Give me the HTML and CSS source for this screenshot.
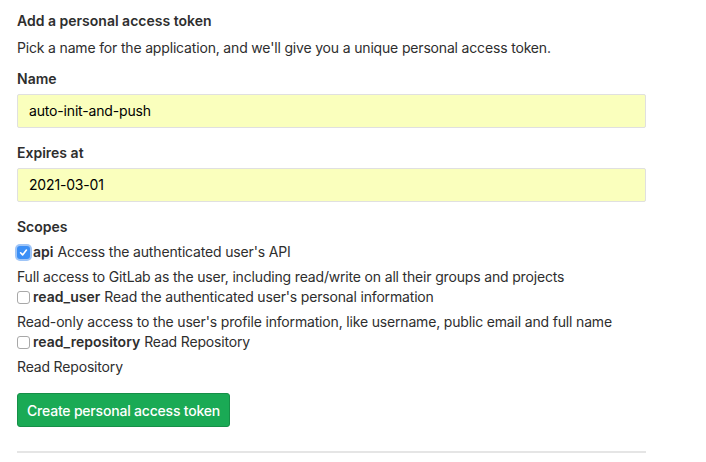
FILE: index.html
```html
<!DOCTYPE html>
<html>
<head>
<meta charset="utf-8">
<link rel="stylesheet" href="styles.css">
</head>
<body>
<div class="page">
  <h4 class="title">Add a personal access token</h4>
  <p class="desc">Pick a name for the application, and we'll give you a unique personal access token.</p>
  <div class="field">
    <label class="label">Name</label>
    <div class="input">auto-init-and-push</div>
  </div>
  <div class="field">
    <label class="label">Expires at</label>
    <div class="input">2021-03-01</div>
  </div>
  <div class="field scopes">
    <label class="label">Scopes</label>
    <div class="scope">
      <div class="check-row">
        <span class="cb checked"><svg viewBox="0 0 13 13" width="13" height="13"><path d="M3.6 6.8 L5.6 8.9 L9.4 4.1" fill="none" stroke="#fff" stroke-width="1.6" stroke-linecap="round" stroke-linejoin="round"/></svg></span>
        <b>api</b> Access the authenticated user's API
      </div>
      <div class="help">Full access to GitLab as the user, including read/write on all their groups and projects</div>
    </div>
    <div class="scope">
      <div class="check-row">
        <span class="cb"></span>
        <b>read_user</b> Read the authenticated user's personal information
      </div>
      <div class="help">Read-only access to the user's profile information, like username, public email and full name</div>
    </div>
    <div class="scope">
      <div class="check-row">
        <span class="cb"></span>
        <b>read_repository</b> Read Repository
      </div>
      <div class="help">Read Repository</div>
    </div>
  </div>
  <div class="actions">
    <button class="btn">Create personal access token</button>
  </div>
  <hr class="sep">
</div>
</body>
</html>
```

FILE: styles.css
```css
html, body {
  margin: 0;
  padding: 0;
  background: #fff;
}
body {
  font-family: Inter, "Liberation Sans", Arial, sans-serif;
  font-size: 14px;
  line-height: 20px;
  letter-spacing: -0.17px;
  color: #2e2e2e;
}
.page {
  padding: 11px 0 0 17px;
  width: 629px;
}
.title {
  margin: 0;
  font-size: 14px;
  font-weight: 600;
  line-height: 20px;
  letter-spacing: 0;
}
.desc {
  margin: 7px 0 11px;
}
.field {
  margin-bottom: 15px;
}
.label {
  display: block;
  font-weight: 600;
  letter-spacing: 0;
  margin-bottom: 5px;
}
.input {
  box-sizing: border-box;
  height: 34px;
  background: #faffbd;
  border: 1px solid #e0e0e0;
  border-radius: 2px;
  padding: 6px 11px;
  color: #000;
}
.check-row {
  display: flex;
  align-items: center;
  white-space: nowrap;
}
.check-row b {
  font-weight: 600;
  letter-spacing: 0;
  margin-right: 4px;
}
.help {
  margin-top: 5px;
}
.cb {
  box-sizing: border-box;
  width: 13px;
  height: 13px;
  border: 1px solid #a8a8a8;
  border-radius: 3px;
  background: #fff;
  margin: 0 3px 0 0;
  flex: none;
}
.cb.checked {
  border: none;
  background: #3b8ff6;
  box-shadow: 0 0 0 2px rgba(80, 150, 240, 0.55);
  display: flex;
}
.cb.checked svg {
  display: block;
}
.scopes {
  margin-bottom: 16px;
}
.actions {
  display: flex;
}
.btn {
  box-sizing: border-box;
  height: 34px;
  width: 213px;
  background: #1aaa55;
  border: 1px solid #168f48;
  border-radius: 3px;
  color: #fff;
  font-family: Inter, "Liberation Sans", Arial, sans-serif;
  font-size: 14px;
  font-weight: 500;
  letter-spacing: -0.2px;
  padding: 0 8px;
  white-space: nowrap;
}
.sep {
  margin: 24px 0 0;
  border: 0;
  border-top: 2px solid #e5e5e5;
  height: 0;
}
```
